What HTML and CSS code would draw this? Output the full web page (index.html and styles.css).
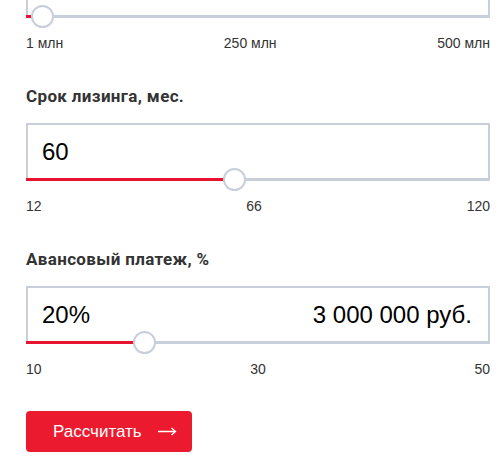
FILE: index.html
```html
<!DOCTYPE html>
<html lang="ru">
<head>
<meta charset="utf-8">
<link rel="stylesheet" href="styles.css">
</head>
<body>
<div class="calc">
  <section class="field field-first">
    <div class="box">
      <div class="box-body"></div>
      <div class="track">
        <div class="fill" style="width:1%"></div>
        <div class="thumb" style="left:16px"></div>
      </div>
    </div>
    <div class="ticks"><span>1 млн</span><span>250 млн</span><span>500 млн</span></div>
  </section>

  <section class="field">
    <h3 class="label">Срок лизинга, мес.</h3>
    <div class="box">
      <div class="box-body"><span class="value">60</span></div>
      <div class="track">
        <div class="fill" style="width:208px"></div>
        <div class="thumb" style="left:208px"></div>
      </div>
    </div>
    <div class="ticks"><span>12</span><span>66</span><span>120</span></div>
  </section>

  <section class="field">
    <h3 class="label">Авансовый платеж, %</h3>
    <div class="box">
      <div class="box-body"><span class="value">20%</span><span class="value">3 000 000 руб.</span></div>
      <div class="track">
        <div class="fill" style="width:118px"></div>
        <div class="thumb" style="left:118px"></div>
      </div>
    </div>
    <div class="ticks"><span>10</span><span>30</span><span>50</span></div>
  </section>

  <button class="btn" type="button">Рассчитать
    <svg class="arrow" width="19" height="9" viewBox="0 0 19 9" aria-hidden="true"><path d="M0 4.5H17.5M13.5 1L17.5 4.5L13.5 8" fill="none" stroke="#fff" stroke-width="1.3"/></svg>
  </button>
</div>
</body>
</html>
```
FILE: styles.css
```css
* { box-sizing: border-box; }
html, body { margin: 0; padding: 0; background: #fff; }
body { font-family: "Liberation Sans", Arial, sans-serif; color: #333; overflow: hidden; }

.calc { padding: 0 9px 0 26px; }

.field-first .box { margin-top: -40px; }

.label {
  margin: 35px 0 17px;
  font-family: Roboto, "Open Sans", sans-serif;
  font-weight: 700;
  font-size: 17px;
  letter-spacing: 0.35px;
  line-height: 20px;
  color: #333;
}

.box {
  border: 2px solid #c8cfdb;
  border-bottom: 0;
}
.box-body {
  height: 53px;
  display: flex;
  align-items: center;
  justify-content: space-between;
  padding: 0 16px 0 14px;
}
.value {
  font-size: 24px;
  color: #000;
  line-height: 28px;
}

.track {
  position: relative;
  height: 3px;
  margin: 0 -2px;
  background: #c8cfdb;
}
.fill {
  height: 3px;
  background: #e8132f;
}
.thumb {
  position: absolute;
  top: -10px;
  width: 23px;
  height: 23px;
  margin-left: -11px;
  border-radius: 50%;
  background: #fff;
  border: 2px solid #c8cfdb;
}

.ticks {
  display: flex;
  justify-content: space-between;
  margin-top: 17px;
  font-size: 14px;
  line-height: 16px;
  color: #333;
}

.btn {
  margin-top: 34px;
  display: inline-flex;
  align-items: center;
  width: 166px;
  height: 41px;
  padding: 0 0 0 27px;
  border: 0;
  border-radius: 4px;
  background: #ec1a2e;
  color: #fff;
  font-family: "Liberation Sans", Arial, sans-serif;
  font-size: 17px;
}
.arrow { margin-left: 16px; }
```
